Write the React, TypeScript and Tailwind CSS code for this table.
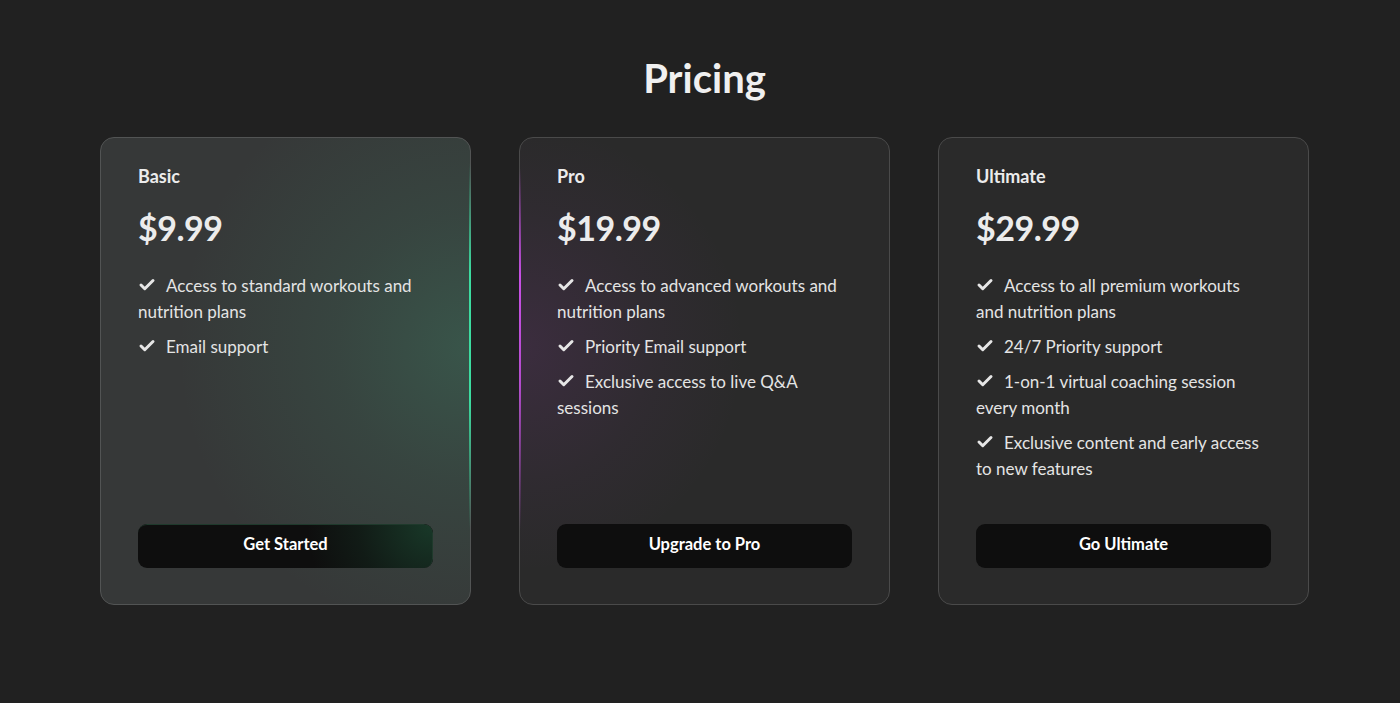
import { Check } from 'lucide-react'

type Plan = {
  name: string
  price: string
  features: string[]
  cta: string
  glow?: 'green' | 'purple'
}

const plans: Plan[] = [
  {
    name: 'Basic',
    price: '$9.99',
    features: ['Access to standard workouts and nutrition plans', 'Email support'],
    cta: 'Get Started',
    glow: 'green',
  },
  {
    name: 'Pro',
    price: '$19.99',
    features: [
      'Access to advanced workouts and nutrition plans',
      'Priority Email support',
      'Exclusive access to live Q&A sessions',
    ],
    cta: 'Upgrade to Pro',
    glow: 'purple',
  },
  {
    name: 'Ultimate',
    price: '$29.99',
    features: [
      'Access to all premium workouts and nutrition plans',
      '24/7 Priority support',
      '1-on-1 virtual coaching session every month',
      'Exclusive content and early access to new features',
    ],
    cta: 'Go Ultimate',
  },
]

function PlanCard({ plan }: { plan: Plan }) {
  const green = plan.glow === 'green'
  const purple = plan.glow === 'purple'
  return (
    <div
      className={
        'relative flex h-[468px] w-[371px] flex-col rounded-[14px] border px-[37px] pt-6 pb-9 ' +
        (green ? 'border-[#525454] bg-[#363838]' : 'border-[#4a4a4a] bg-[#2a2a2a]')
      }
    >
      {green ? (
        <>
          <div className="pointer-events-none absolute inset-0 rounded-[13px] bg-[radial-gradient(circle_at_100%_45%,rgba(64,160,120,0.28)_0%,rgba(64,160,120,0.12)_30%,rgba(64,160,120,0)_65%)]" />
          <div className="pointer-events-none absolute top-[25px] right-[-1px] bottom-[75px] w-[2px] bg-[linear-gradient(to_bottom,rgba(60,220,160,0)_0%,rgba(60,220,160,1)_30%,rgba(60,220,160,1)_65%,rgba(60,220,160,0)_100%)]" />
        </>
      ) : null}
      {purple ? (
        <>
          <div className="pointer-events-none absolute inset-0 rounded-[13px] bg-[radial-gradient(circle_at_0%_45%,rgba(150,60,170,0.16)_0%,rgba(150,60,170,0.05)_30%,rgba(150,60,170,0)_50%)]" />
          <div className="pointer-events-none absolute top-[30px] bottom-[75px] left-[-1px] w-[2px] bg-[linear-gradient(to_bottom,rgba(200,80,230,0)_0%,rgba(200,80,230,1)_30%,rgba(200,80,230,0.85)_60%,rgba(200,80,230,0)_100%)]" />
        </>
      ) : null}

      <div className="relative text-[18px] leading-7 font-bold text-[#ececec]">{plan.name}</div>
      <div className="relative mt-[18px] text-[34px] leading-10 font-bold tracking-[-0.5px] text-[#ececec]">
        {plan.price}
      </div>
      <ul className="relative mt-[25px] space-y-[9px]">
        {plan.features.map((f) => (
          <li key={f} className="text-[17px] leading-[26px] text-[#e4e4e4]">
            <Check
              className="mr-[10px] inline-block align-[-2px]"
              size={18}
              strokeWidth={4}
              color="#e6e6e6"
            />
            {f}
          </li>
        ))}
      </ul>
      <button
        type="button"
        className="relative mt-auto h-11 w-full overflow-hidden rounded-[9px] bg-[#0e0e0e] pb-[3px] text-[16.5px] font-bold text-white"
      >
        {green ? (
          <span className="pointer-events-none absolute inset-0 rounded-[9px] border-t border-r border-[#1f3a2c] bg-[radial-gradient(circle_at_100%_0%,rgba(40,120,80,0.4)_0%,rgba(40,120,80,0.12)_25%,rgba(40,120,80,0)_42%)]" />
        ) : null}
        <span className="relative">{plan.cta}</span>
      </button>
    </div>
  )
}

export default function App() {
  return (
    <div
      className="min-h-[703px] w-full bg-[#212121] pt-[54px]"
      style={{ fontFamily: 'Lato, "Noto Sans", sans-serif' }}
    >
      <div className="ml-[100px] w-[1209px]">
        <h1 className="text-center text-[40px] leading-[48px] font-bold text-[#f0f0f0]">Pricing</h1>
        <div className="mt-[35px] flex gap-[48px]">
          {plans.map((p) => (
            <PlanCard key={p.name} plan={p} />
          ))}
        </div>
      </div>
    </div>
  )
}
